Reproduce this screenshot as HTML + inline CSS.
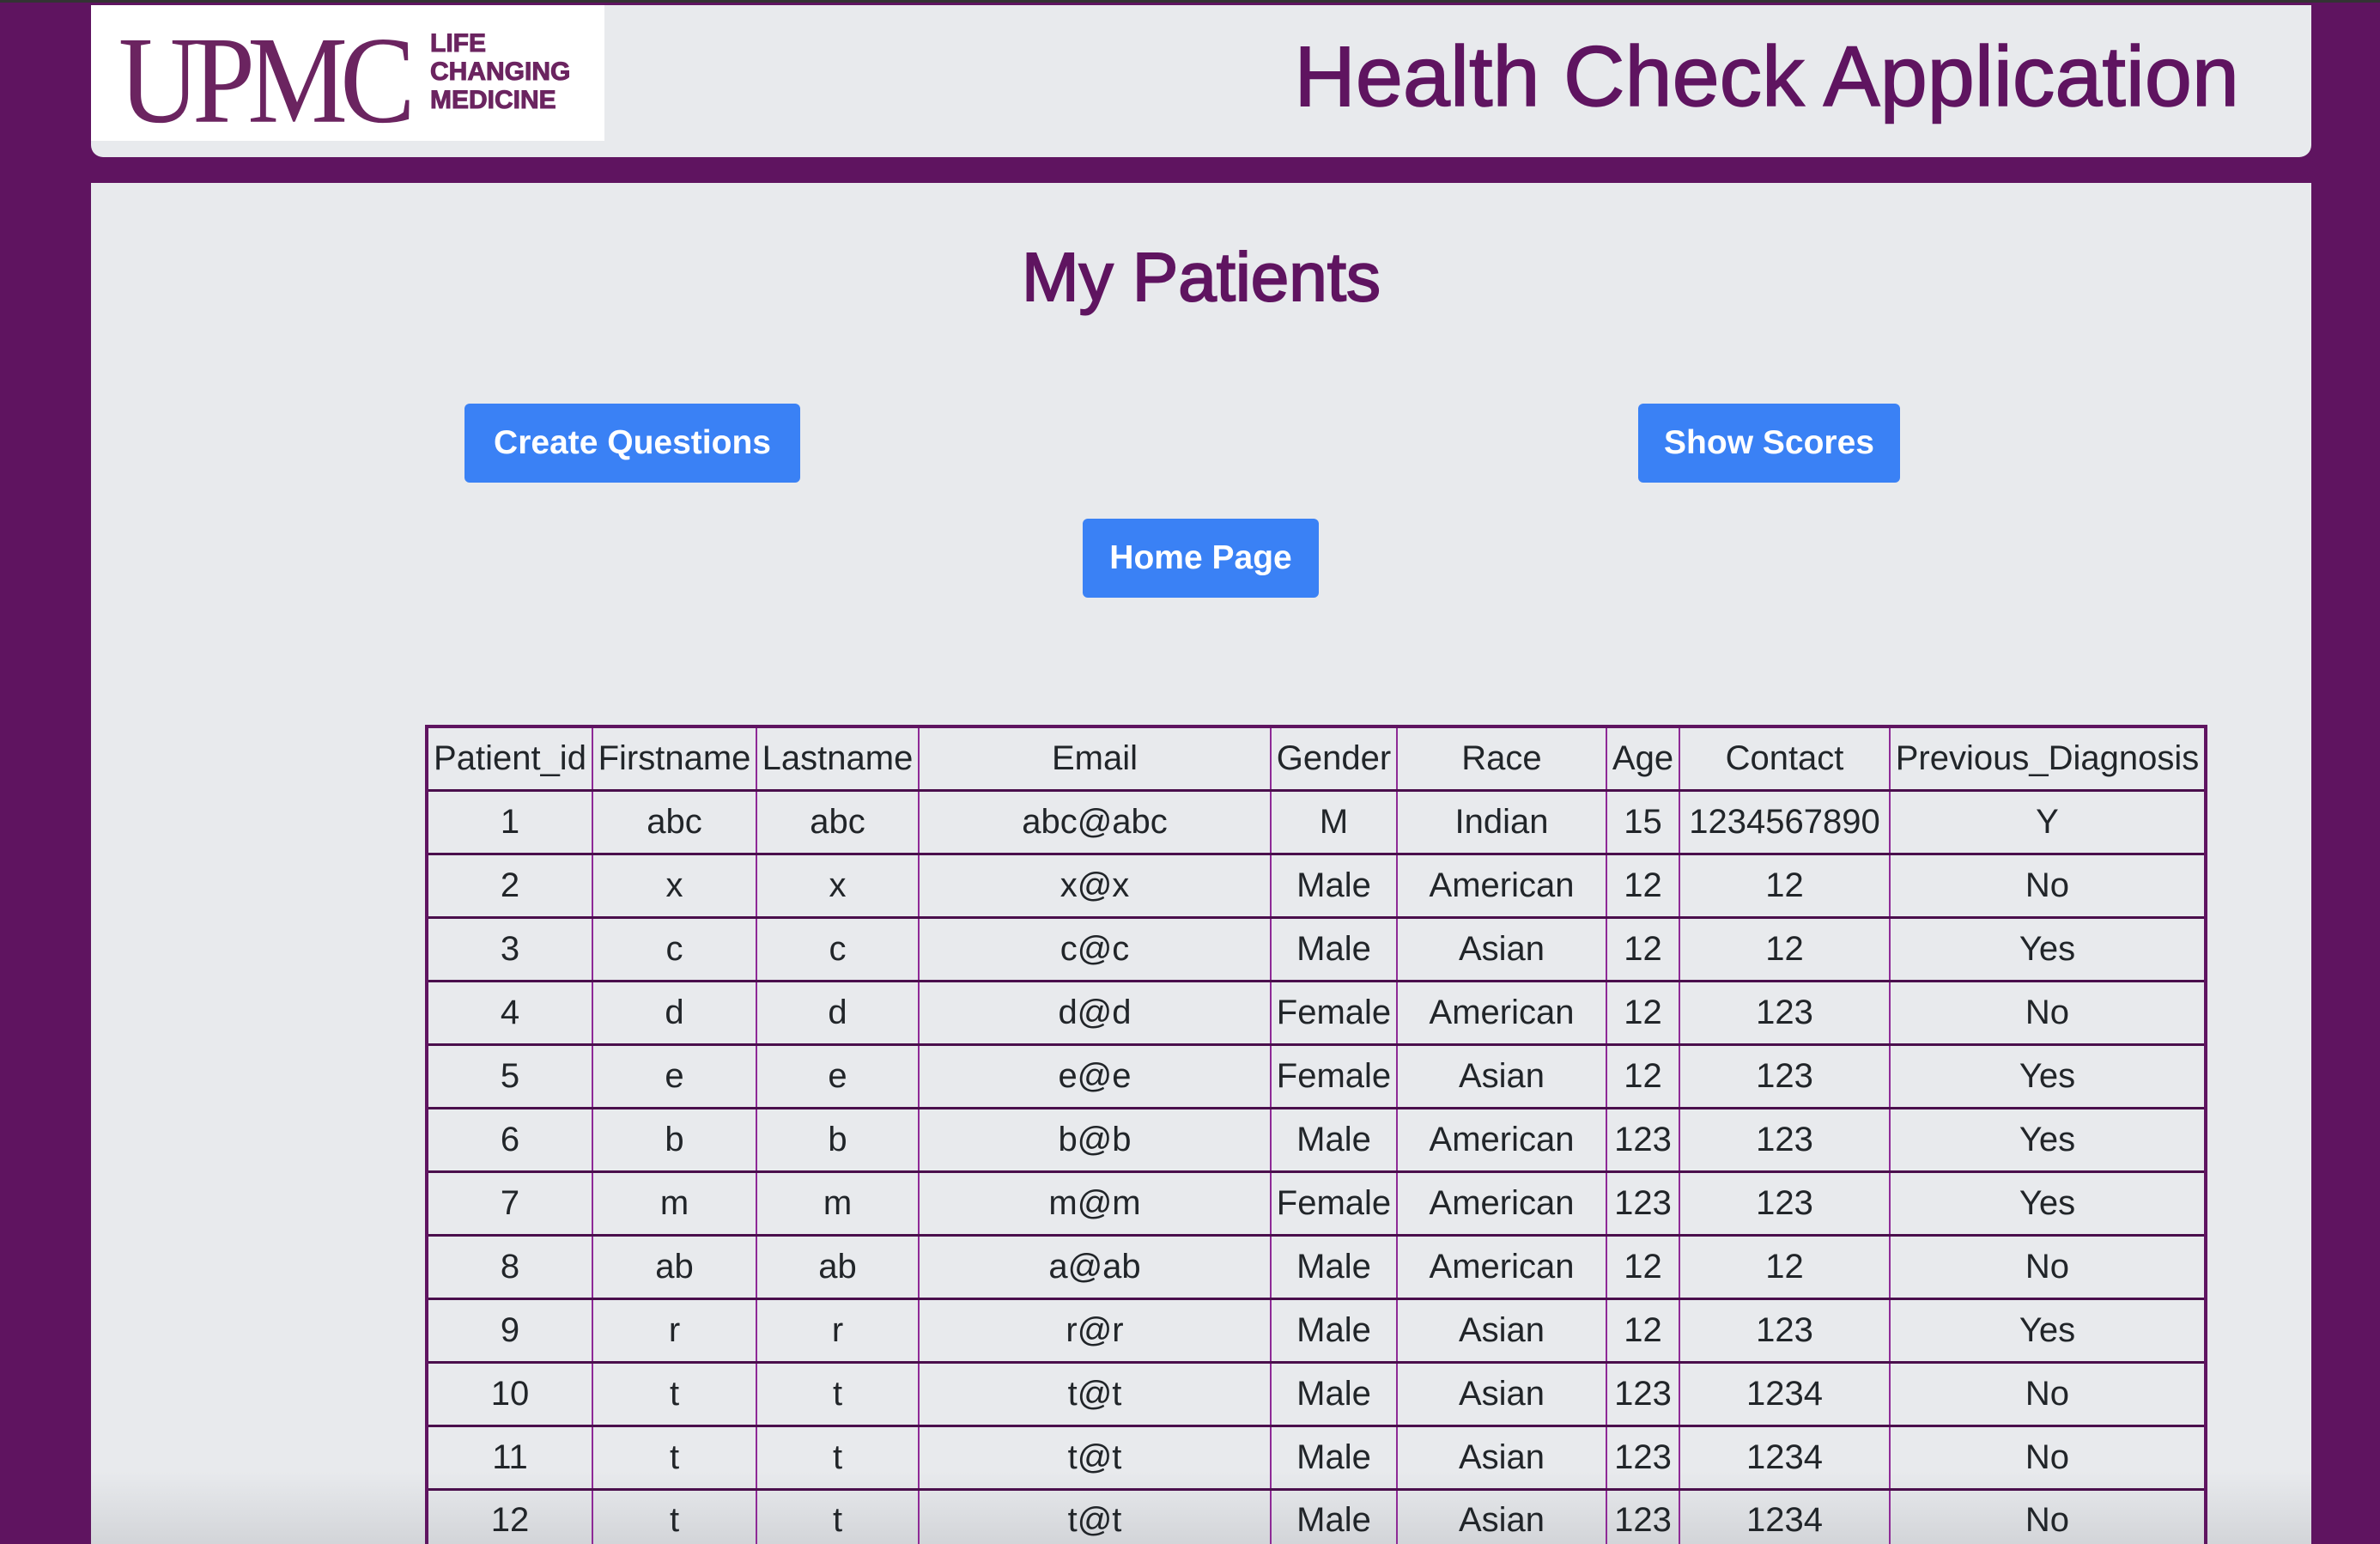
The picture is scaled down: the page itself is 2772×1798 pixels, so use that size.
<!DOCTYPE html>
<html><head><meta charset="utf-8"><style>
*{margin:0;padding:0;box-sizing:border-box}
html,body{width:2772px;height:1798px;overflow:hidden}
body{background:#5f1460;font-family:"Liberation Sans",Arial,sans-serif;position:relative;border-top:3px solid #333}
.hdr{position:absolute;left:106px;top:3px;width:2586px;height:177px;background:#e8eaed;border-radius:0 0 14px 14px}
.logo{position:absolute;left:0;top:0;width:598px;height:158px;background:#fff}
.upmc{position:absolute;left:32px;top:4px;font-family:"Liberation Serif",serif;font-size:134px;color:#6b2460;letter-spacing:-9px;transform:scale(0.98,1.08);transform-origin:left top}
.tag{position:absolute;left:395px;top:28px;font-weight:bold;font-size:30px;line-height:33px;color:#6b2460;-webkit-text-stroke:1px #6b2460}
.ttl{position:absolute;right:84px;top:26px;font-size:99px;color:#5f1460;-webkit-text-stroke:1.5px #5f1460}
.main{position:absolute;left:106px;top:210px;width:2586px;height:1600px;background:linear-gradient(#e8eaed 0,#e8eaed 1500px,#cfd1d5 1600px)}
h1{position:absolute;left:0;width:100%;top:64px;text-align:center;font-size:80px;font-weight:normal;-webkit-text-stroke:2px #5f1460;color:#5f1460}
.btn{position:absolute;background:#3a81f5;color:#fff;font-weight:bold;font-size:39px;border-radius:6px;display:flex;align-items:center;justify-content:center}
table{position:absolute;left:389px;top:631px;border-collapse:collapse;table-layout:fixed;border:4px solid #5f1460;font-size:40px;color:#212529}
td{border:2px solid #8e2a96;height:74px;text-align:center;white-space:nowrap;overflow:hidden;padding:0}
tr{border-bottom:3px solid #4a0f4c}
</style></head><body>
<div class="hdr">
 <div class="logo"><div class="upmc">UPMC</div><div class="tag">LIFE<br>CHANGING<br>MEDICINE</div></div>
 <div class="ttl">Health Check Application</div>
</div>
<div class="main">
 <h1>My Patients</h1>
 <div class="btn" style="left:435px;top:257px;width:391px;height:92px">Create Questions</div>
 <div class="btn" style="left:1802px;top:257px;width:305px;height:92px">Show Scores</div>
 <div class="btn" style="left:1155px;top:391px;width:275px;height:92px">Home Page</div>
 <table>
 <colgroup><col style="width:193px"><col style="width:191px"><col style="width:189px"><col style="width:410px"><col style="width:147px"><col style="width:244px"><col style="width:85px"><col style="width:245px"><col style="width:368px"></colgroup>
 <tr><td>Patient_id</td><td>Firstname</td><td>Lastname</td><td>Email</td><td>Gender</td><td>Race</td><td>Age</td><td>Contact</td><td>Previous_Diagnosis</td></tr>
 <tr><td>1</td><td>abc</td><td>abc</td><td>abc@abc</td><td>M</td><td>Indian</td><td>15</td><td>1234567890</td><td>Y</td></tr>
 <tr><td>2</td><td>x</td><td>x</td><td>x@x</td><td>Male</td><td>American</td><td>12</td><td>12</td><td>No</td></tr>
 <tr><td>3</td><td>c</td><td>c</td><td>c@c</td><td>Male</td><td>Asian</td><td>12</td><td>12</td><td>Yes</td></tr>
 <tr><td>4</td><td>d</td><td>d</td><td>d@d</td><td>Female</td><td>American</td><td>12</td><td>123</td><td>No</td></tr>
 <tr><td>5</td><td>e</td><td>e</td><td>e@e</td><td>Female</td><td>Asian</td><td>12</td><td>123</td><td>Yes</td></tr>
 <tr><td>6</td><td>b</td><td>b</td><td>b@b</td><td>Male</td><td>American</td><td>123</td><td>123</td><td>Yes</td></tr>
 <tr><td>7</td><td>m</td><td>m</td><td>m@m</td><td>Female</td><td>American</td><td>123</td><td>123</td><td>Yes</td></tr>
 <tr><td>8</td><td>ab</td><td>ab</td><td>a@ab</td><td>Male</td><td>American</td><td>12</td><td>12</td><td>No</td></tr>
 <tr><td>9</td><td>r</td><td>r</td><td>r@r</td><td>Male</td><td>Asian</td><td>12</td><td>123</td><td>Yes</td></tr>
 <tr><td>10</td><td>t</td><td>t</td><td>t@t</td><td>Male</td><td>Asian</td><td>123</td><td>1234</td><td>No</td></tr>
 <tr><td>11</td><td>t</td><td>t</td><td>t@t</td><td>Male</td><td>Asian</td><td>123</td><td>1234</td><td>No</td></tr>
 <tr><td>12</td><td>t</td><td>t</td><td>t@t</td><td>Male</td><td>Asian</td><td>123</td><td>1234</td><td>No</td></tr>
 </table>
</div>
</body></html>
